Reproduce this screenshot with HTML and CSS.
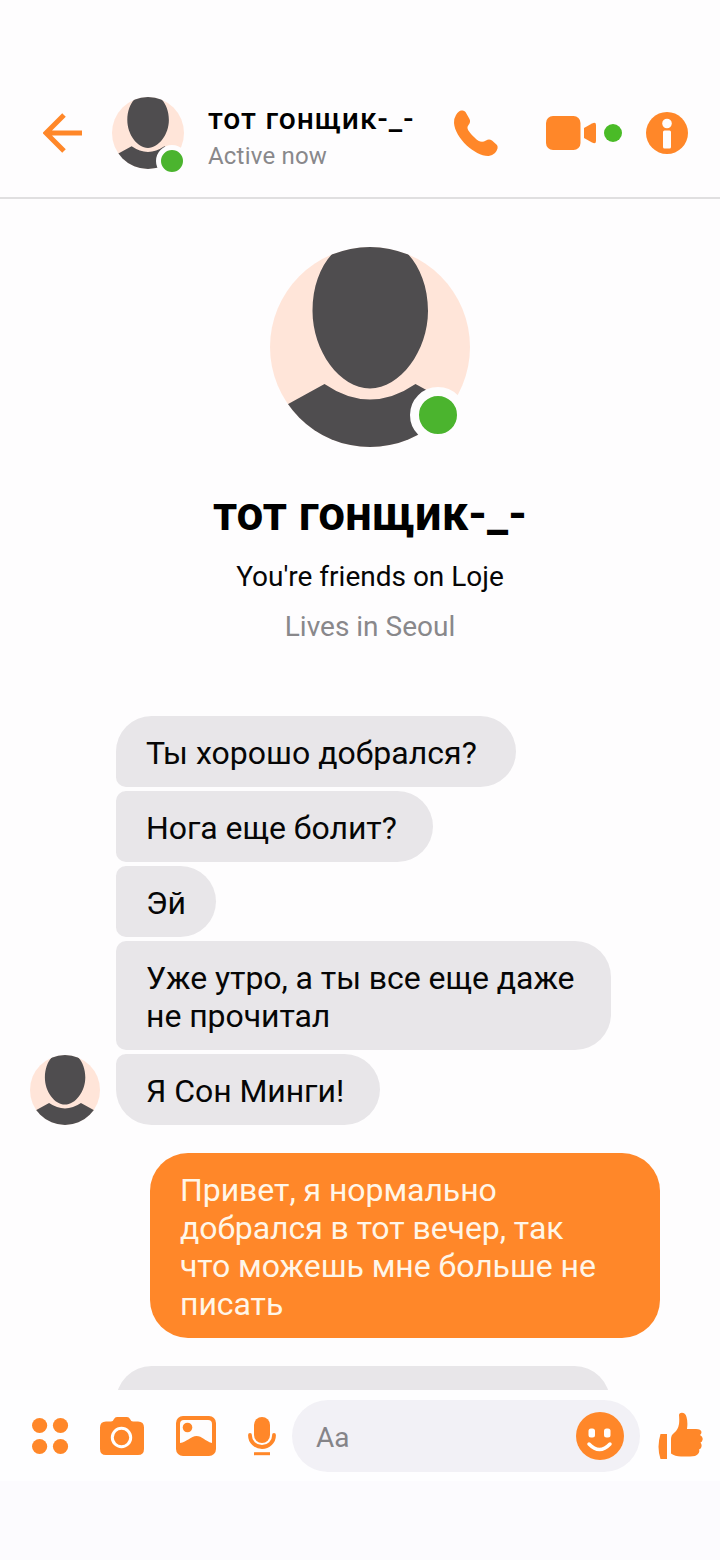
FILE: index.html
```html
<!DOCTYPE html>
<html lang="ru">
<head>
<meta charset="utf-8">
<title>Chat</title>
<link rel="stylesheet" href="styles.css">
</head>
<body>
<svg class="defs" width="0" height="0">
  <symbol id="avatar" viewBox="0 0 200 200">
    <clipPath id="round"><circle cx="100" cy="100" r="100"/></clipPath>
    <g clip-path="url(#round)">
      <rect width="200" height="200" fill="#ffe5d9"/>
      <path fill="#4f4d4f" d="M42.500 64C42.500 104 70 141.500 100 141.500S158 104 158 64C158 40 150 20 138 7C125 -8 75 -8 62 7C50 20 42.500 40 42.500 64ZM0 167L54.500 137Q100 168 145.500 137L200 167V200H0Z"/>
    </g>
  </symbol>
</svg>
<div class="screen">
  <header class="header">
    <svg class="back" width="40" height="40" viewBox="0 0 40 40"><path d="M39 20H4M21 2L3 20L21 38" fill="none" stroke="#ff8729" stroke-width="5"/></svg>
    <div class="avatar avatar-small">
      <svg width="72" height="72"><use href="#avatar"/></svg>
      <span class="online online-small"></span>
    </div>
    <div class="who">
      <div class="who-name">тот гонщик-_-</div>
      <div class="who-status">Active now</div>
    </div>
    <svg class="call" width="46" height="48" viewBox="0 0 46 48"><path fill="#ff8729" d="M8 .5Q5 0 2 5Q0 8 0 13C1 28 21 46 34 46Q37 46.500 41 43Q45 38 43 35L38 30.500Q35 28.500 32 30.500C28 33 25 32 20 27C14 21 12 18 14.500 15Q17 12 15.500 9L11.500 2Q10 0 8 .5Z"/></svg>
    <svg class="video" width="76" height="36" viewBox="0 0 76 36"><rect y="1" width="34.500" height="34" rx="7" fill="#ff8729"/><path fill="#ff8729" d="M38 13L46 8.500Q50 6.500 50 10V26Q50 29.500 46 27.500L38 23Z"/><circle cx="67" cy="18" r="9" fill="#4abb27"/></svg>
    <svg class="info" width="42" height="42" viewBox="0 0 42 42"><circle cx="21" cy="21" r="21" fill="#ff8729"/><circle cx="21" cy="11.500" r="4.800" fill="#fefdfe"/><rect x="17" y="18.500" width="8" height="18" rx="1.500" fill="#fefdfe"/></svg>
  </header>
  <main class="thread">
    <section class="profile">
      <div class="avatar avatar-large">
        <svg width="200" height="200"><use href="#avatar"/></svg>
        <span class="online online-large"></span>
      </div>
      <h1 class="name">тот гонщик-_-</h1>
      <p class="relation">You're friends on Loje</p>
      <p class="place">Lives in Seoul</p>
    </section>
    <section class="group">
      <svg class="sender" width="70" height="70"><use href="#avatar"/></svg>
      <div class="bubbles">
        <div class="bubble first">Ты хорошо добрался?</div>
        <div class="bubble">Нога еще болит?</div>
        <div class="bubble short">Эй</div>
        <div class="bubble">Уже утро, а ты все еще даже<br>не прочитал</div>
        <div class="bubble last">Я Сон Минги!</div>
      </div>
    </section>
    <div class="reply">Привет, я нормально<br>добрался в тот вечер, так<br>что можешь мне больше не<br>писать</div>
    <div class="bubble next"></div>
  </main>
  <footer class="composer">
    <svg class="apps" width="38" height="38" viewBox="0 0 38 38" fill="#ff8729"><circle cx="7.600" cy="8.500" r="7.600"/><circle cx="28.500" cy="8.500" r="7.600"/><circle cx="7.600" cy="29.500" r="7.600"/><circle cx="28.500" cy="29.500" r="7.600"/></svg>
    <svg class="camera" width="44" height="38" viewBox="0 0 44 38"><path fill="#ff8729" d="M6 4.500H11Q13 4.500 14 2Q15 0 17 0H27Q29 0 30 2Q31 4.500 33 4.500H38Q44 4.500 44 10.500V32Q44 38 38 38H6Q0 38 0 32V10.500Q0 4.500 6 4.500Z"/><circle cx="21.500" cy="20.500" r="9.200" fill="#ff8729" stroke="#fff" stroke-width="3"/></svg>
    <svg class="photo" width="40" height="40" viewBox="0 0 40 40"><rect width="40" height="40" rx="7" fill="#ff8729"/><path fill="#fefdfe" d="M8 4H32Q36 4 36 8V27C29 25 26 20 20.500 20C15 20 11 26 4 27V8Q4 4 8 4Z"/><circle cx="11.500" cy="11.500" r="4.800" fill="#ff8729"/></svg>
    <svg class="mic" width="28" height="39" viewBox="0 0 28 39"><rect x="6" y="0" width="16" height="26" rx="8" fill="#ff8729"/><path d="M2 18V18.500A12 11.500 0 0 0 26 18.500V18" fill="none" stroke="#ff8729" stroke-width="3.800" stroke-linecap="round"/><path d="M6 36.700H22" stroke="#ff8729" stroke-width="3"/></svg>
    <div class="field">
      <span class="hint">Aa</span>
      <svg class="smile" width="48" height="48" viewBox="0 0 48 48"><circle cx="24" cy="24" r="24" fill="#ff8729"/><rect x="12.500" y="16.500" width="6.500" height="9" rx="2.500" fill="#fff"/><rect x="28" y="16.500" width="6.500" height="9" rx="2.500" fill="#fff"/><path d="M13 32Q23.500 43 34 32" fill="none" stroke="#fff" stroke-width="3.500" stroke-linecap="round"/></svg>
    </div>
    <svg class="like" width="46" height="48" viewBox="0 0 46 48" fill="#ff8729"><path d="M2.500 22H9V47H2.500Q-1.500 35 2.500 22ZM22.500 1Q27 0 28.500 5Q30 10 29 17H38Q43 17 43.500 20Q43.500 22 42 23Q45.500 25 44.500 28Q44 30 42.500 30.500Q44.500 33 43 36Q42 37 41 37.500Q42 40 40 42Q38 44.500 32 44.500H23Q17 44.500 13 41.500V27Q13 23 16 21Q20 18 21 12Q21.500 8 21 3Q21 1.500 22.500 1Z"/></svg>
  </footer>
</div>
</body>
</html>
```
FILE: styles.css
```css
* { box-sizing: border-box; }
body { margin: 0; font-family: Roboto, "Noto Sans", sans-serif; color: #060606; background: #fefdfe; }
svg { display: block; flex: none; }
.defs { position: absolute; }
.screen { width: 720px; height: 1560px; display: flex; flex-direction: column; overflow: hidden; }

.header { height: 199px; flex: none; display: flex; align-items: flex-start; padding: 97px 32px 0 43px; border-bottom: 2px solid #e0dfe0; }
.back { margin-top: 16px; }
.avatar { position: relative; }
.avatar-small { margin-left: 29px; width: 72px; }
.online { position: absolute; border-radius: 50%; background: #4bb42e; border-style: solid; border-color: #fefdfe; }
.online-small { left: 44px; top: 48px; width: 32px; height: 32px; border-width: 5px; }
.online-large { left: 140px; top: 140px; width: 56px; height: 56px; border-width: 9px; }
.who { width: 230px; margin-left: 24px; padding-top: 2px; white-space: nowrap; }
.who-name { font-size: 30px; line-height: 40px; font-weight: 500; color: #000; letter-spacing: 1px; }
.who-status { font-size: 24px; line-height: 34px; color: #89888b; letter-spacing: 0.2px; }
.call { margin: 13px 0 0 16px; }
.video { margin: 18px 0 0 46px; }
.info { margin: 15px 0 0 24px; }

.thread { height: 1191px; flex: none; overflow: hidden; }
.profile { display: flex; flex-direction: column; align-items: center; padding: 48px 0 0 20px; }
.avatar-large { width: 200px; }
.name { margin: 37px 0 0; font-size: 47.5px; line-height: 60px; font-weight: 700; color: #000; white-space: nowrap; }
.relation, .place { margin: 0; font-size: 28px; line-height: 36px; white-space: nowrap; }
.relation { margin-top: 15px; }
.place { margin-top: 14px; color: #89888b; }

.group { display: flex; align-items: flex-end; margin-top: 71px; padding-left: 30px; gap: 16px; }
.bubbles { display: flex; flex-direction: column; align-items: flex-start; gap: 4px; }
.bubble { background: #e8e6e9; border-radius: 10px 36px 36px 10px; padding: 18px 36px 15px 30px; font-size: 32px; line-height: 38px; letter-spacing: -0.06px; white-space: nowrap; }
.first { border-top-left-radius: 36px; padding-right: 39px; letter-spacing: 0.03px; }
.short { padding-right: 30px; }
.last { border-bottom-left-radius: 36px; }
.reply { width: 510px; margin: 28px 0 0 150px; padding: 18px 30px 15px; border-radius: 38px; background: #ff8729; color: #fff6e8; font-size: 32px; line-height: 38px; letter-spacing: -0.06px; white-space: nowrap; }
.next { width: 494px; height: 71px; margin: 28px 0 0 116px; border-radius: 38px; }

.composer { flex: 1; display: flex; align-items: flex-start; padding: 10px 16px 0 32px; background: linear-gradient(#fefeff 91px, #fcfbfe 91px); }
.apps { margin-top: 17px; }
.camera { margin: 17px 0 0 30px; }
.photo { margin: 16px 0 0 32px; }
.mic { margin: 17px 0 0 32px; }
.field { width: 348px; flex: none; height: 72px; margin-left: 16px; padding: 0 16px 0 24px; display: flex; align-items: center; justify-content: space-between; border-radius: 36px; background: #f2f1f6; }
.hint { font-size: 28px; color: #858488; padding-top: 3px; }
.like { margin: 12px 0 0 18px; }
```
